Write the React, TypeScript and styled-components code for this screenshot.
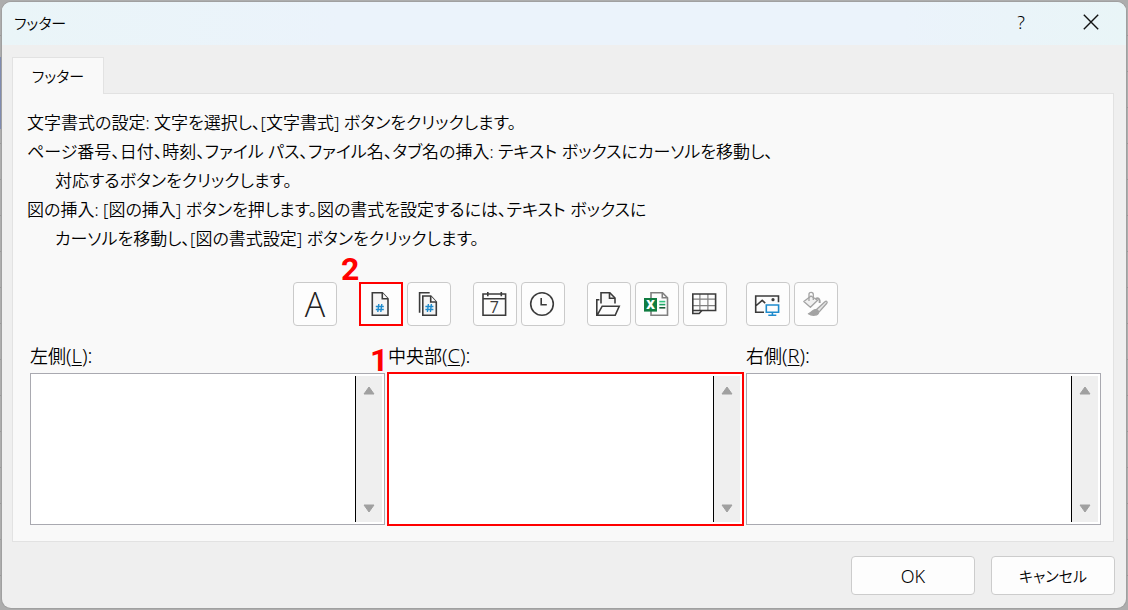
import React from "react";
import styled, { createGlobalStyle, css } from "styled-components";

const ink = "#3b3b3b";
const blue = "#1e8bcd";
const red = "#ff0000";

const GlobalStyle = createGlobalStyle`
  * { box-sizing: border-box; }
  body {
    margin: 0;
    font-family: "Noto Sans", "Noto Sans CJK JP", sans-serif;
    font-size: 17px;
    font-weight: 350;
    font-feature-settings: "palt";
    color: #000;
  }
  button { font: inherit; font-feature-settings: inherit; color: inherit; padding: 0; }
`;

const Desktop = styled.div`
  display: flex;
  min-height: 100vh;
  padding: 2px;
  background:
    linear-gradient(#7f8bb0, #7f8bb0) 0 57px / 2px 72px no-repeat,
    repeating-linear-gradient(#adadad 0 35px, #999 35px 36px);
`;

const Dialog = styled.section`
  flex: 1;
  display: flex;
  flex-direction: column;
  border-radius: 9px;
  overflow: hidden;
  background: #efefef;
  box-shadow: 0 0 0 1px #a0a0a0;
`;

const TitleBar = styled.header`
  display: flex;
  align-items: center;
  height: 43px;
  padding: 0 0 3px 12px;
  background: linear-gradient(90deg, #eaf5f8, #ebf3fb 30%, #ebf3fb 80%, #e9f5f7);
`;

const Title = styled.h1`
  flex: 1;
  margin: 0;
  font-size: 15px;
  font-weight: inherit;
`;

const CaptionButton = styled.button`
  display: flex;
  align-items: center;
  justify-content: center;
  width: 70px;
  height: 40px;
  border: 0;
  background: transparent;
  font-size: 18px;
`;

const Content = styled.div`
  flex: 1;
  display: flex;
  flex-direction: column;
  padding: 12px 12px 14px 10px;
`;

const Tab = styled.button`
  align-self: flex-start;
  position: relative;
  width: 92px;
  height: 37px;
  margin-bottom: -1px;
  padding-bottom: 2px;
  border: 1px solid #e2e2e2;
  border-bottom: 0;
  background: #f9f9f9;
  font-size: 15px;
`;

const Panel = styled.div`
  flex: 1;
  padding: 14px 12px 15px 14px;
  border: 1px solid #e2e2e2;
  background: #f9f9f9;
`;

const Help = styled.div`
  line-height: 29px;
`;

const HelpLine = styled.p<{ $indent?: boolean }>`
  margin: 0;
  padding-left: ${(p) => (p.$indent ? 28 : 0)}px;
  white-space: nowrap;
`;

const Toolbar = styled.div`
  display: flex;
  justify-content: center;
  padding: 29px 0 16px 3px;
`;

const ToolGroup = styled.div<{ $before?: number }>`
  display: flex;
  gap: 4px;
  margin-left: ${(p) => p.$before ?? 22}px;
`;

const ToolButton = styled.button<{ $marked?: boolean }>`
  position: relative;
  display: flex;
  align-items: center;
  justify-content: center;
  width: 44px;
  height: 44px;
  background: #fdfdfd;
  border: 1px solid #cacaca;
  border-radius: 4px;
  ${(p) =>
    p.$marked &&
    css`
      border: 2px solid ${red};
      border-radius: 0;
    `}
`;

const LetterIcon = styled.span`
  font-family: "Open Sans", sans-serif;
  font-size: 34px;
  font-weight: 300;
  line-height: 40px;
  color: #222;
`;

const Glyph = styled.svg`
  display: block;
  overflow: visible;
`;

const Callout = styled.span<{ $left: number; $top: number }>`
  position: absolute;
  left: ${(p) => p.$left}px;
  top: ${(p) => p.$top}px;
  font: 700 32px/32px Roboto, Arial, sans-serif;
  color: ${red};
  text-shadow: 0 0 2px #fff;
  pointer-events: none;
`;

const Sections = styled.div`
  display: grid;
  grid-template-columns: repeat(3, 1fr);
  gap: 3px;
  padding-left: 3px;
`;

const Section = styled.div`
  position: relative;
`;

const SectionLabel = styled.label`
  display: block;
  height: 31px;
  font-size: 18px;
  line-height: 28px;
`;

const AccessKey = styled.span`
  font-size: 20px;
  u { text-underline-offset: 2px; text-decoration-thickness: 1px; }
`;

const Field = styled.div<{ $marked?: boolean }>`
  display: flex;
  height: 152px;
  padding: 2px;
  border: 1px solid #a9a9b0;
  background: #fff;
  ${(p) => p.$marked && css`outline: 2px solid ${red}; outline-offset: -1px;`}
`;

const TextBox = styled.textarea`
  flex: 1;
  min-width: 0;
  border: 0;
  outline: 0;
  resize: none;
  overflow: hidden;
  background: transparent;
  font: inherit;
`;

const ScrollTrack = styled.div`
  display: flex;
  flex-direction: column;
  justify-content: space-between;
  width: 27px;
  border-left: 1px solid #000;
  background: #efefef;
`;

const ScrollButton = styled.button`
  display: flex;
  align-items: center;
  justify-content: center;
  height: 28px;
  border: 0;
  background: transparent;
`;

const Actions = styled.footer`
  display: flex;
  justify-content: flex-end;
  gap: 16px;
  padding: 0 11px 13px;
`;

const ActionButton = styled.button<{ $latin?: boolean }>`
  width: 124px;
  height: 39px;
  border: 1px solid #ccc;
  border-radius: 4px;
  background: #fdfdfd;
  font-size: ${(p) => (p.$latin ? 18 : 15)}px;
`;

function Icon({ children }: { children: React.ReactNode }) {
  return (
    <Glyph width="24" height="24" viewBox="0 0 24 24" fill="none" stroke={ink} strokeWidth="1.6" aria-hidden="true">
      {children}
    </Glyph>
  );
}

function Hash({ x, y }: { x: number; y: number }) {
  return (
    <path
      d={`M${x - 1} ${y - 4}l-1 8M${x + 2} ${y - 4}l-1 8M${x - 4} ${y - 1.5}h8M${x - 4} ${y + 1.5}h8`}
      stroke={blue}
      strokeWidth="1.4"
    />
  );
}

const PageIcon = () => (
  <Icon>
    <path d="M3.3.8h10l5.7 6v16.5H3.3z" fill="#f5f5f5" />
    <path d="M13.3.8v6H19" fill="#fff" />
    <Hash x={10.8} y={16} />
  </Icon>
);

const PagesIcon = () => (
  <Icon>
    <path d="M12.7.8H2.6v20" />
    <path d="M5.8 4h8l5.5 6v13.2H5.8z" fill="#f5f5f5" />
    <path d="M13.7 4v6h5.6" fill="#fff" />
    <Hash x={12.4} y={16} />
  </Icon>
);

const DateIcon = () => (
  <Icon>
    <path d="M0 2h22.6v21.2H0zM0 6.8h22.6M4.8 0v4.2M18.3 0v4.2" />
    <text x="11.3" y="21" textAnchor="middle" fontFamily="Open Sans" fontSize="16" fontWeight="400" fill={ink} stroke="none">
      7
    </text>
  </Icon>
);

const TimeIcon = () => (
  <Icon>
    <circle cx="11" cy="12" r="11.3" />
    <path d="M10.2 6v6.7h5.6" />
  </Icon>
);

const PathIcon = () => (
  <Icon>
    <path d="M4 11.6V.8h8.8L18 6v5.6" fill="#f8f8f8" />
    <path d="M12.5.8v5.4H18" />
    <path d="M2.4 7.8H-.2v15.4h18.4l4-9H5.2l-5 9" />
  </Icon>
);

const FileIcon = () => (
  <Icon>
    <path d="M6 6V.8h11.5l5 5v17.4H6V19" stroke="#808080" />
    <path d="M17.3.8v5h5" stroke="#808080" />
    <path d="M-1 6h13v13.6H-1z" fill="#107c41" stroke="none" />
    <path d="M14.3 9.6h6" stroke="#33c481" />
    <path d="M14.3 12.6h6" stroke="#21a366" />
    <path d="M14.3 15.8h6" stroke="#185c37" />
    <text x="5.5" y="17" textAnchor="middle" fontFamily="Open Sans" fontSize="12" fontWeight="800" fill="#fff" stroke="none">
      X
    </text>
  </Icon>
);

const SheetIcon = () => (
  <Icon>
    <path d="M6.9 2v16M14.9 2v16M0 7.2h22.5M0 13.6h22.5" stroke="#808080" strokeWidth="1.2" />
    <path d="M-.2 2h22.8v16.5H-.2z" />
    <path d="M-.2 18.5v3h6.4l2.6-3" />
  </Icon>
);

const PictureIcon = () => (
  <Icon>
    <path d="M8 20.2H-.3V4h22.8v6.3M-.3 14 6.2 8.4l3 2.8" />
    <circle cx="17" cy="7.7" r="1.6" fill={ink} stroke="none" />
    <path d="M10.3 13h12.3v7.2H10.3zM16.4 20.2v2.8M12.3 23.2h8" stroke={blue} />
  </Icon>
);

const FormatPictureIcon = () => (
  <Icon>
    <g stroke="#a3a3a3" strokeWidth="1.3" strokeLinejoin="round">
      <path d="M-.2 9.4 7 4l6.6 4.2-7.2 7z" fill="#f0f0f0" />
      <path d="M5 9V2.2C5-.2 9.3-.4 9.3 2.5V8" />
      <path d="M11.5 6.8c3-1.5 4.6.4 4.2 4.2" strokeWidth="2" />
      <path d="M22.8 9.4c.6.5.4 1.2 0 1.8l-7.6 8.7-2.7-2.5 8.4-7.6c.6-.6 1.4-.9 1.9-.4z" fill="#e4e4e4" />
      <path d="M12 17.6c-3.4-.4-3.4 2.6-7.6 4.2 3.4 2.2 10.4 2 10.2-1.8z" fill="#a3a3a3" />
    </g>
  </Icon>
);

function Scrollbar() {
  return (
    <ScrollTrack>
      <ScrollButton type="button" aria-label="上へスクロール">
        <Glyph width="12" height="9" viewBox="0 0 12 9">
          <path d="M6 1 11 8H1z" fill="#a0a0a0" stroke="#a0a0a0" strokeLinejoin="round" />
        </Glyph>
      </ScrollButton>
      <ScrollButton type="button" aria-label="下へスクロール">
        <Glyph width="12" height="9" viewBox="0 0 12 9">
          <path d="M6 8 11 1H1z" fill="#a0a0a0" stroke="#a0a0a0" strokeLinejoin="round" />
        </Glyph>
      </ScrollButton>
    </ScrollTrack>
  );
}

type SectionProps = { id: string; name: string; accessKey: string; callout?: string };

function FooterSection({ id, name, accessKey, callout }: SectionProps) {
  return (
    <Section>
      <SectionLabel htmlFor={id}>
        {name}
        <AccessKey>(<u>{accessKey}</u>):</AccessKey>
      </SectionLabel>
      <Field $marked={Boolean(callout)}>
        <TextBox id={id} accessKey={accessKey} />
        <Scrollbar />
      </Field>
      {callout && <Callout $left={-18} $top={2}>{callout}</Callout>}
    </Section>
  );
}

export default function App() {
  return (
    <>
      <GlobalStyle />
      <Desktop>
        <Dialog role="dialog" aria-labelledby="dialog-title">
          <TitleBar>
            <Title id="dialog-title">フッター</Title>
            <CaptionButton type="button" aria-label="ヘルプ">?</CaptionButton>
            <CaptionButton type="button" aria-label="閉じる">
              <Glyph width="16" height="16" viewBox="0 0 16 16">
                <path d="m.8.8 14.4 14.4M15.2.8.8 15.2" stroke="#111" strokeWidth="1.4" />
              </Glyph>
            </CaptionButton>
          </TitleBar>
          <Content>
            <Tab type="button" role="tab" aria-selected="true">フッター</Tab>
            <Panel role="tabpanel">
              <Help>
                <HelpLine>文字書式の設定: 文字を選択し、[文字書式] ボタンをクリックします。</HelpLine>
                <HelpLine>ページ番号、日付、時刻、ファイル パス、ファイル名、タブ名の挿入: テキスト ボックスにカーソルを移動し、</HelpLine>
                <HelpLine $indent>対応するボタンをクリックします。</HelpLine>
                <HelpLine>図の挿入: [図の挿入] ボタンを押します。図の書式を設定するには、テキスト ボックスに</HelpLine>
                <HelpLine $indent>カーソルを移動し、[図の書式設定] ボタンをクリックします。</HelpLine>
              </Help>
              <Toolbar role="toolbar">
                <ToolGroup $before={0}>
                  <ToolButton type="button" aria-label="文字書式"><LetterIcon>A</LetterIcon></ToolButton>
                </ToolGroup>
                <ToolGroup>
                  <ToolButton type="button" aria-label="ページ番号の挿入" $marked>
                    <PageIcon />
                    <Callout $left={-20} $top={-31}>2</Callout>
                  </ToolButton>
                  <ToolButton type="button" aria-label="ページ数の挿入"><PagesIcon /></ToolButton>
                </ToolGroup>
                <ToolGroup>
                  <ToolButton type="button" aria-label="日付の挿入"><DateIcon /></ToolButton>
                  <ToolButton type="button" aria-label="時刻の挿入"><TimeIcon /></ToolButton>
                </ToolGroup>
                <ToolGroup>
                  <ToolButton type="button" aria-label="ファイル パスの挿入"><PathIcon /></ToolButton>
                  <ToolButton type="button" aria-label="ファイル名の挿入"><FileIcon /></ToolButton>
                  <ToolButton type="button" aria-label="シート名の挿入"><SheetIcon /></ToolButton>
                </ToolGroup>
                <ToolGroup $before={19}>
                  <ToolButton type="button" aria-label="図の挿入"><PictureIcon /></ToolButton>
                  <ToolButton type="button" aria-label="図の書式設定"><FormatPictureIcon /></ToolButton>
                </ToolGroup>
              </Toolbar>
              <Sections>
                <FooterSection id="left" name="左側" accessKey="L" />
                <FooterSection id="center" name="中央部" accessKey="C" callout="1" />
                <FooterSection id="right" name="右側" accessKey="R" />
              </Sections>
            </Panel>
          </Content>
          <Actions>
            <ActionButton type="button" $latin>OK</ActionButton>
            <ActionButton type="button">キャンセル</ActionButton>
          </Actions>
        </Dialog>
      </Desktop>
    </>
  );
}
